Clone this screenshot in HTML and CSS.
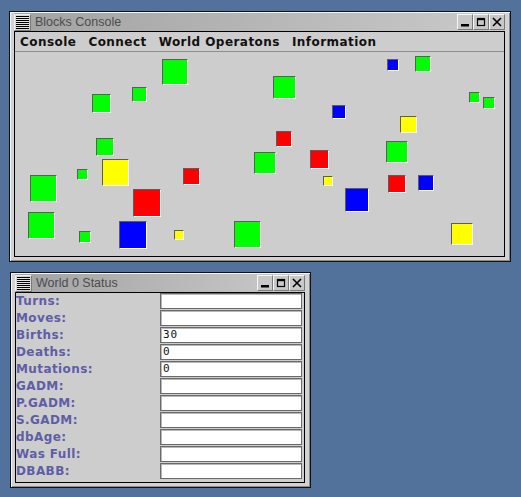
FILE: index.html
```html
<!DOCTYPE html>
<html>
<head>
<meta charset="utf-8">
<link rel="stylesheet" href="styles.css">
</head>
<body>
<div class="desk">
  <section class="win win-console">
    <header class="titlebar">
      <span class="wmenu"></span>
      <span class="title">Blocks Console</span>
      <span class="btns">
        <span class="btn"><svg width="14" height="14" viewBox="0 0 14 14"><rect x="3" y="9" width="8" height="2.5" fill="#000"/></svg></span>
        <span class="btn"><svg width="14" height="14" viewBox="0 0 14 14"><rect x="3.5" y="3.5" width="7" height="7" fill="none" stroke="#000" stroke-width="1.2"/><rect x="3" y="3" width="8" height="2.2" fill="#000"/></svg></span>
        <span class="btn"><svg width="14" height="14" viewBox="0 0 14 14"><path d="M3 3 L11 11 M11 3 L3 11" stroke="#000" stroke-width="1.6"/></svg></span>
      </span>
    </header>
    <div class="client">
      <nav class="menubar">
        <span>Console</span>
        <span>Connect</span>
        <span>World Operatons</span>
        <span>Information</span>
      </nav>
      <div class="canvas">
        <i class="blk g" style="--x:147px;--y:7px;--s:26px"></i>
        <i class="blk g" style="--x:77px;--y:42px;--s:19px"></i>
        <i class="blk g" style="--x:117px;--y:35px;--s:15px"></i>
        <i class="blk g" style="--x:81px;--y:86px;--s:18px"></i>
        <i class="blk y" style="--x:87px;--y:107px;--s:27px"></i>
        <i class="blk g" style="--x:62px;--y:117px;--s:11px"></i>
        <i class="blk r" style="--x:168px;--y:116px;--s:17px"></i>
        <i class="blk g" style="--x:15px;--y:123px;--s:27px"></i>
        <i class="blk r" style="--x:118px;--y:137px;--s:28px"></i>
        <i class="blk g" style="--x:13px;--y:160px;--s:27px"></i>
        <i class="blk g" style="--x:64px;--y:179px;--s:12px"></i>
        <i class="blk b" style="--x:104px;--y:169px;--s:28px"></i>
        <i class="blk y" style="--x:159px;--y:178px;--s:10px"></i>
        <i class="blk g" style="--x:219px;--y:169px;--s:27px"></i>
        <i class="blk g" style="--x:239px;--y:100px;--s:22px"></i>
        <i class="blk b" style="--x:372px;--y:7px;--s:12px"></i>
        <i class="blk g" style="--x:400px;--y:4px;--s:16px"></i>
        <i class="blk g" style="--x:258px;--y:24px;--s:23px"></i>
        <i class="blk g" style="--x:454px;--y:40px;--s:11px"></i>
        <i class="blk g" style="--x:468px;--y:45px;--s:12px"></i>
        <i class="blk b" style="--x:317px;--y:53px;--s:14px"></i>
        <i class="blk y" style="--x:385px;--y:64px;--s:17px"></i>
        <i class="blk r" style="--x:261px;--y:79px;--s:16px"></i>
        <i class="blk r" style="--x:295px;--y:98px;--s:19px"></i>
        <i class="blk g" style="--x:371px;--y:89px;--s:22px"></i>
        <i class="blk y" style="--x:308px;--y:124px;--s:10px"></i>
        <i class="blk r" style="--x:373px;--y:123px;--s:18px"></i>
        <i class="blk b" style="--x:403px;--y:123px;--s:16px"></i>
        <i class="blk b" style="--x:330px;--y:136px;--s:24px"></i>
        <i class="blk y" style="--x:436px;--y:171px;--s:22px"></i>
      </div>
    </div>
  </section>

  <section class="win win-status">
    <header class="titlebar">
      <span class="wmenu"></span>
      <span class="title">World 0 Status</span>
      <span class="btns">
        <span class="btn"><svg width="14" height="14" viewBox="0 0 14 14"><rect x="3" y="9" width="8" height="2.5" fill="#000"/></svg></span>
        <span class="btn"><svg width="14" height="14" viewBox="0 0 14 14"><rect x="3.5" y="3.5" width="7" height="7" fill="none" stroke="#000" stroke-width="1.2"/><rect x="3" y="3" width="8" height="2.2" fill="#000"/></svg></span>
        <span class="btn"><svg width="14" height="14" viewBox="0 0 14 14"><path d="M3 3 L11 11 M11 3 L3 11" stroke="#000" stroke-width="1.6"/></svg></span>
      </span>
    </header>
    <div class="client status">
      <label>Turns:</label><span class="field"></span>
      <label>Moves:</label><span class="field"></span>
      <label>Births:</label><span class="field">30</span>
      <label>Deaths:</label><span class="field">0</span>
      <label>Mutations:</label><span class="field">0</span>
      <label>GADM:</label><span class="field"></span>
      <label>P.GADM:</label><span class="field"></span>
      <label>S.GADM:</label><span class="field"></span>
      <label>dbAge:</label><span class="field"></span>
      <label>Was Full:</label><span class="field"></span>
      <label>DBABB:</label><span class="field"></span>
    </div>
  </section>
</div>
</body>
</html>
```
FILE: styles.css
```css
html, body {
  margin: 0;
  padding: 0;
  background: #52729c;
  width: 521px;
  height: 497px;
  overflow: hidden;
}
.desk {
  display: flex;
  flex-direction: column;
  align-items: flex-start;
}
.win {
  box-sizing: border-box;
  border: 1px solid #111;
  background: #d2d2d2;
  box-shadow: inset 1px 1px 0 #f4f4f4, inset -1px -1px 0 #8c8c8c;
  padding: 1px 5px 4px 4px;
  display: flex;
  flex-direction: column;
}
.win-console {
  margin: 11px 0 0 9px;
  width: 502px;
  height: 251px;
}
.win-status {
  margin: 10px 0 0 10px;
  width: 301px;
  height: 216px;
}
.titlebar {
  height: 18px;
  display: flex;
  align-items: center;
  background: linear-gradient(90deg, #a2a2a2 0%, #b6b6b6 50%, #cacaca 100%);
  flex: none;
}
.wmenu {
  box-sizing: border-box;
  width: 17px;
  height: 17px;
  border: 1px solid;
  border-color: #f0f0f0 #7a7a7a #7a7a7a #f0f0f0;
  background: #d4d4d4;
  position: relative;
  flex: none;
}
.wmenu::before {
  content: "";
  position: absolute;
  left: 1px;
  right: 1px;
  top: 1px;
  bottom: 1px;
  background: repeating-linear-gradient(180deg, #000 0 1px, #e6e6e6 1px 2px);
}
.title {
  flex: 1;
  padding-left: 4px;
  font-family: "Liberation Sans", Arial, sans-serif;
  font-size: 12.5px;
  color: #4c4c4c;
  white-space: nowrap;
  line-height: 18px;
}
.btns {
  display: flex;
  flex: none;
}
.btn {
  box-sizing: border-box;
  width: 16px;
  height: 16px;
  border: 1px solid;
  border-color: #f6f6f6 #7a7a7a #7a7a7a #f6f6f6;
  background: #c8c8c8;
  display: flex;
  align-items: center;
  justify-content: center;
}
.btn svg { display: block; }
.client {
  flex: 1;
  border: 1px solid #000;
  background: #cdcdcd;
  display: flex;
  flex-direction: column;
  min-height: 0;
}
.menubar {
  height: 19px;
  flex: none;
  display: flex;
  align-items: center;
  gap: 12px;
  padding-left: 5px;
  border-bottom: 1px solid #8e8e8e;
  font-family: "DejaVu Sans", sans-serif;
  font-weight: bold;
  font-size: 12px;
  letter-spacing: 0.45px;
  color: #111;
}
.canvas {
  flex: 1;
  position: relative;
  background: #cdcdcd;
  overflow: hidden;
}
.blk {
  position: absolute;
  left: var(--x);
  top: var(--y);
  width: var(--s);
  height: var(--s);
  box-sizing: border-box;
  border: 1px solid;
  border-color: #5c5c5c #ffffff #ffffff #5c5c5c;
}
.g { background: #00ff00; }
.r { background: #ff0000; }
.b { background: #0000ff; }
.y { background: #ffff00; }

.status {
  display: grid;
  grid-template-columns: 144px 142px;
  grid-auto-rows: 17px;
  padding: 0 2px 2px 0;
  align-content: start;
}
.status label {
  font-family: "DejaVu Sans", sans-serif;
  font-weight: bold;
  font-size: 12px;
  letter-spacing: 0.4px;
  color: #5e5ea6;
  line-height: 17px;
  white-space: nowrap;
}
.field {
  box-sizing: border-box;
  height: 16px;
  background: #fff;
  border: 1px solid #6a6a6a;
  box-shadow: inset 1px 1px 0 #b8b8b8;
  font-family: "DejaVu Sans Mono", monospace;
  font-size: 11px;
  letter-spacing: 1px;
  color: #111;
  line-height: 14px;
  padding-left: 2px;
}
```
